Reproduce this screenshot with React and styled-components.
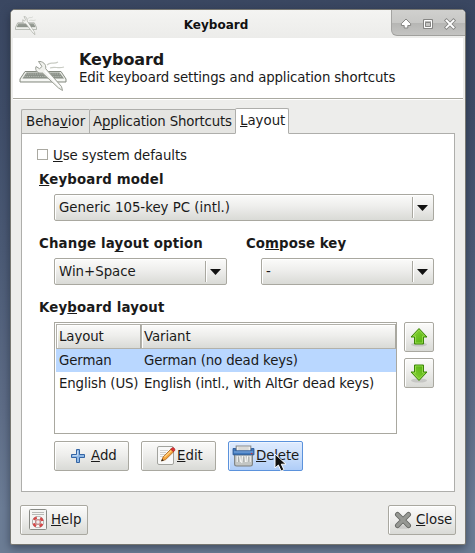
import React from "react";
import styled, { createGlobalStyle, css } from "styled-components";

const GlobalStyle = createGlobalStyle`
  html, body { margin: 0; padding: 0; }
  body { overflow: hidden; }
  * { box-sizing: border-box; }
`;

const Desktop = styled.div`
  width: 475px;
  height: 553px;
  padding: 9px 9px 8px 10px;
  font: 13.33px/16px "DejaVu Sans", sans-serif;
  color: #1a1a1a;
  background: linear-gradient(180deg, #3a4761 0%, #3f4d68 20%, #4b5a75 45%, #5f6e88 75%, #6c7d96 92%, #6c7d95 100%);
  overflow: hidden;
`;

const Window = styled.div`
  width: 456px;
  height: 536px;
  border: 1px solid #777771;
  border-radius: 5px 5px 2px 2px;
  background: #ededeb;
  box-shadow: 0 3px 8px rgba(20, 28, 42, 0.5);
  overflow: hidden;
  display: flex;
  flex-direction: column;
`;

const TitleBar = styled.div`
  height: 28px;
  flex: none;
  display: flex;
  align-items: flex-start;
  padding: 5px 0 0 4px;
  background: linear-gradient(#f4f4f2, #ececea);
`;

const TitleText = styled.div`
  flex: 1;
  padding-left: 10px;
  margin-top: 1px;
  text-align: center;
  font-size: 12px;
  font-weight: bold;
  line-height: 18px;
  color: #111;
  text-indent: -6px;
`;

const WindowControls = styled.div`
  width: 74px;
  height: 26px;
  margin-top: -5px;
  display: flex;
  align-items: center;
  padding: 3px 0 0 7px;
  gap: 8px;
  border-left: 1px solid #a4a4a2;
  border-bottom: 1px solid #a0a09d;
  border-bottom-left-radius: 6px;
  background: linear-gradient(#d0d0ce, #c8c8c6 50%, #b6b6b4 53%, #c4c4c2);
`;

const Header = styled.div`
  height: 61px;
  flex: none;
  margin: 0 2px;
  padding: 13px 0 0 6px;
  display: flex;
  background: #fff;
  border-bottom: 1px solid #aaa9a1;
  box-shadow: 0 1px 0 #fff;
  > svg { margin-top: 8px; }
`;

const HeaderText = styled.div`
  padding-left: 12px;
`;

const Heading = styled.div`
  font-size: 16px;
  letter-spacing: -0.1px;
  line-height: 17px;
  font-weight: bold;
`;

const Subheading = styled.div`
  line-height: 18px;
  margin-top: 1px;
  letter-spacing: -0.135px;
  white-space: nowrap;
`;

const TabBar = styled.div`
  height: 26px;
  margin: 9px 0 -1px 10px;
  display: flex;
  align-items: flex-end;
  flex: none;
`;

const Tab = styled.div`
  width: ${(p) => p.$w}px;
  height: ${(p) => (p.$active ? 26 : 25)}px;
  padding: 4px 0 0 ${(p) => (p.$tight ? 3 : 4)}px;
  letter-spacing: ${(p) => (p.$tight ? -0.17 : 0)}px;
  white-space: nowrap;
  border: 1px solid #aeaeab;
  border-right-width: ${(p) => (p.$active ? 1 : 0)}px;
  border-bottom: 1px solid ${(p) => (p.$active ? "#fff" : "#aeaeab")};
  border-top-left-radius: 2px;
  border-top-right-radius: ${(p) => (p.$active ? 2 : 0)}px;
  background: ${(p) => (p.$active ? "#fff" : "#e5e5e2")};
  position: relative;
  z-index: 1;
`;

const Panel = styled.div`
  width: 434px;
  height: 359px;
  flex: none;
  margin-left: 10px;
  padding: 15px 20px 0 15px;
  background: #fff;
  border: 1px solid #aeaeab;
`;

const CheckRow = styled.label`
  display: flex;
  height: 17px;
  gap: 5px;
`;

const CheckBox = styled.span`
  width: 11px;
  height: 11px;
  border: 1px solid #aaa9a1;
  background: #fff;
`;

const CheckLabel = styled.span`
  line-height: 16px;
  margin-top: -1px;
  letter-spacing: -0.08px;
`;

const FieldLabel = styled.div`
  height: 16px;
  margin-left: 2px;
  font-weight: bold;
  letter-spacing: ${(p) => p.$track ?? 0.16}px;
  white-space: nowrap;
`;

const FieldRow = styled.div`
  display: flex;
  gap: 34px;
  margin-top: ${(p) => (p.$first ? 6 : 15)}px;
`;

const Field = styled.div`
  width: ${(p) => p.$w}px;
`;

const buttonFace = css`
  border: 1px solid #a9a8a0;
  border-radius: 2px;
  background: linear-gradient(#fbfbfa, #eeeeec 45%, #d9dad6);
  box-shadow: inset 1px 1px 0 #fff;
`;

const Combo = styled.div`
  ${buttonFace}
  width: ${(p) => p.$w}px;
  height: 27px;
  margin: 6px 0 0 17px;
  padding: 0 5px 0 4px;
  display: flex;
  align-items: center;
  justify-content: space-between;
  line-height: 24px;
`;

const ComboArrow = styled.span`
  height: 21px;
  padding-left: 4px;
  border-left: 1px solid #a9a8a0;
  box-shadow: inset 1px 0 0 #fff;
  display: flex;
  align-items: center;
`;

const ListRow = styled.div`
  display: flex;
  margin: 6px 0 0 17px;
  gap: 7px;
`;

const List = styled.div`
  width: 343px;
  height: 112px;
  border: 1px solid #a9a8a0;
  padding: 1px 0 0 1px;
`;

const ListHeader = styled.div`
  display: flex;
  height: 25px;
`;

const HeaderCell = styled.div`
  width: ${(p) => p.$w}px;
  padding: 4px 0 0 2px;
  letter-spacing: -0.1px;
  border: 1px solid #b2b1aa;
  border-right: 1px solid #a9a8a0;
  background: linear-gradient(#fbfbfa, #eeeeec 45%, #d9dad6);
  box-shadow: inset 1px 1px 0 #fff;
`;

const ListItem = styled.div`
  display: flex;
  height: 23px;
  line-height: 23px;
  letter-spacing: -0.13px;
  white-space: nowrap;
  background: ${(p) => (p.$selected ? "#b9d7ff" : "#fff")};
`;

const Cell = styled.div`
  width: ${(p) => p.$w}px;
  padding-left: 3px;
`;

const MoveButtons = styled.div`
  display: flex;
  flex-direction: column;
  gap: 6px;
`;

const Button = styled.div`
  ${buttonFace}
  width: ${(p) => p.$w}px;
  height: 30px;
  padding-left: ${(p) => p.$pad}px;
  display: flex;
  align-items: center;
  gap: ${(p) => p.$gap || 0}px;
  line-height: 26px;
  white-space: nowrap;
  svg { flex: none; }
  ${(p) =>
    p.$hot &&
    css`
      position: relative;
      border-color: #5b92dc;
      background: linear-gradient(#dfebfe, #cbdffb 50%, #afcdf8);
      box-shadow: inset 1px 1px 0 #eef5ff;
      letter-spacing: -0.1px;
    `}
`;

const ButtonText = styled.span`
  height: 26px;
`;

const ButtonRow = styled.div`
  display: flex;
  gap: 12px;
  margin: 7px 0 0 17px;
`;

const Footer = styled.div`
  display: flex;
  justify-content: space-between;
  margin: 13px 9px 0 9px;
`;

const Pointer = styled.svg`
  position: absolute;
  left: 45px;
  top: 11px;
`;

const Mnemonic = styled.span`
  text-decoration: underline;
  text-decoration-thickness: 1px;
  text-decoration-skip-ink: none;
  text-underline-offset: ${(p) => p.$drop || 1}px;
`;

const KeyboardIcon = ({ width, height }) => (
  <svg width={width} height={height} viewBox="0 0 48 32" preserveAspectRatio="none">
    <path d="M28 6c4-4 6 0 11-3M31 9c5-2 8 1 14-1" fill="none" stroke="#c9ccc4" strokeWidth="1.2" />
    <path d="M6 12.5h36l5 7.5v3H1v-3z" fill="#eceee9" stroke="#858a80" />
    <path d="M7.5 13.5h33l4.5 6H3.500z" fill="#8b9189" />
    <path d="M7 15h35M5.500 17.500h38" stroke="#b4b9b0" strokeDasharray="1.2 1" />
    <path d="M2 21h44" stroke="#fff" />
    <path d="M19.500 2.500c4-.5 8 2.500 7.200 7.200L42.500 27.500l1 4-4-2.500L23.500 14c-4 .8-8-2-6.500-6.500l3.500 2.200 2.500-2.200z" fill="#f0f1ed" stroke="#9a9e95" />
    <path d="M25.500 11.500l15 16" stroke="#fff" strokeWidth="1.300" />
  </svg>
);

const Chevron = () => (
  <svg width="11" height="6" viewBox="0 0 11 6">
    <path d="M0 0h11L5.5 6z" fill="#111" />
  </svg>
);

const MoveArrow = ({ down }) => (
  <svg width="20" height="20" viewBox="0 0 20 20">
    <defs>
      <linearGradient id="green" x2="1" y2="1">
        <stop stopColor="#8fd83a" />
        <stop offset="1" stopColor="#4aab0a" />
      </linearGradient>
    </defs>
    <ellipse cx="10" cy="17.5" rx="8" ry="2" fill="#777" opacity=".25" />
    <g transform={down ? "matrix(1 0 0 -1 0 19)" : undefined}>
      <path d="M10 1.5l8 8.5h-3.5v7h-9v-7H2z" fill="url(#green)" stroke="#3c8508" strokeLinejoin="round" />
      <path d="M10 3.2l5.700 5.800h-2.200v7h-7V9H4.300z" fill="none" stroke="#a5e25a" strokeWidth=".7" />
    </g>
  </svg>
);

const AddIcon = () => (
  <svg width="14" height="14" viewBox="0 0 14 14">
    <path d="M5.500.5h3v5h5v3h-5v5h-3v-5h-5v-3h5z" fill="#8fb8e5" stroke="#3465a4" strokeLinejoin="round" />
    <path d="M6.600 2v4.600H2" fill="none" stroke="#c6dcf4" />
  </svg>
);

const EditIcon = () => (
  <svg width="20" height="20" viewBox="0 0 20 20">
    <rect x="1.500" y=".5" width="16" height="18" rx="1.500" fill="#f8f8f7" stroke="#a2a39e" />
    <path d="M4 4.500h8M4 6.500h6M4 8.500h5M4 10.500h3" stroke="#d2d2ce" />
    <path d="M5.500 15l1.600-4L15 3l2.800 2.600-8.200 8z" fill="#f5a43a" stroke="#a65f16" strokeWidth=".8" />
    <path d="M8.500 11l7-6.500" stroke="#ffd488" strokeWidth="1.100" />
    <path d="M14.700 3.200l1.300-1.400c1.600-.7 3.500 1 2.800 2.500L17.500 5.800z" fill="#dc3434" stroke="#a51b1b" strokeWidth=".6" />
    <path d="M5.200 15.300l.9-2.400 1.700 1.500z" fill="#222" />
  </svg>
);

const ShredderIcon = () => (
  <svg width="23" height="22" viewBox="0 0 22 22" preserveAspectRatio="none">
    <path d="M4 1h14v7H4z" fill="#eeeeec" stroke="#85878a" />
    <path d="M6 3h10M6 5h10" stroke="#c6c6c4" />
    <path d="M2.500 9h17v10q0 2-2 2h-13q-2 0-2-2z" fill="#c3c6c4" stroke="#7c7f7e" />
    <path d="M5 11v6M7.300 11l1 6M10 11l-.7 7M12.400 11l.5 6M15 11l-.8 6M17.300 11v6" stroke="#f6f6f5" strokeWidth="1.100" />
    <path d="M6.200 12v5M11.300 12v5M16.200 12v5" stroke="#949795" strokeWidth=".6" />
    <path d="M1 3.500h2.500v2.300h15V3.500H21v6.300H1z" fill="#4079bd" stroke="#265290" strokeWidth=".8" />
    <path d="M1.800 7h18.400" stroke="#86b1e2" />
    <path d="M18 8.600h1.500" stroke="#d33" />
  </svg>
);

const HelpIcon = () => (
  <svg width="20" height="22" viewBox="0 0 20 22">
    <rect x="1.500" y=".5" width="17" height="20" rx="1" fill="#f4f4f2" stroke="#888a85" />
    <path d="M4 3.500h12M4 5.500h12" stroke="#b8b9b5" />
    <circle cx="10" cy="13" r="4.200" fill="none" stroke="#8f8f8c" strokeWidth="3.600" />
    <circle cx="10" cy="13" r="4.200" fill="none" stroke="#f5f5f3" strokeWidth="2.400" />
    <circle cx="10" cy="13" r="4.500" fill="none" stroke="#d64848" strokeWidth="2.500" strokeDasharray="3.500 3.570" strokeDashoffset="-1.800" />
    <circle cx="10" cy="13" r="2.200" fill="#eee" stroke="#c64a4a" strokeWidth=".6" />
  </svg>
);

const CloseIcon = () => (
  <svg width="18" height="18" viewBox="0 0 18 18">
    <ellipse cx="9" cy="16" rx="8" ry="1.800" fill="#888" opacity=".25" />
    <path d="M3.500 3.500l11 11m0-11l-11 11" stroke="#656763" strokeWidth="5" strokeLinecap="round" />
    <path d="M3.500 3.500l11 11m0-11l-11 11" stroke="#969893" strokeWidth="3.200" strokeLinecap="round" />
  </svg>
);

const ShadeGlyph = () => (
  <svg width="14" height="14" viewBox="0 0 14 14">
    <path d="M7 2L2.400 6.700v1.800h2.800V11h3.600V8.500h2.800V6.700z" fill="#fff" stroke="#858583" strokeLinejoin="round" />
  </svg>
);

const MaximizeGlyph = () => (
  <svg width="14" height="14" viewBox="0 0 14 14">
    <path d="M2.500 2.500h9v9h-9z" fill="#bdbdbb" stroke="#858583" />
    <path d="M3.500 3.500h7v7h-7z" fill="none" stroke="#fff" />
    <path d="M4.500 5.500h5v4h-5z" fill="#c5c5c3" stroke="#858583" />
  </svg>
);

const CloseGlyph = () => (
  <svg width="14" height="14" viewBox="0 0 14 14">
    <path d="M3.500 3.500l7 7m0-7l-7 7" stroke="#858583" strokeWidth="3.600" strokeLinecap="square" />
    <path d="M3.500 3.500l7 7m0-7l-7 7" stroke="#fff" strokeWidth="1.900" strokeLinecap="square" />
  </svg>
);

const Select = ({ width, children }) => (
  <Combo $w={width}>
    <span>{children}</span>
    <ComboArrow><Chevron /></ComboArrow>
  </Combo>
);

export default function App() {
  return (
    <Desktop>
      <GlobalStyle />
      <Window>
        <TitleBar>
          <KeyboardIcon width={22} height={20} />
          <TitleText>Keyboard</TitleText>
          <WindowControls>
            <ShadeGlyph />
            <MaximizeGlyph />
            <CloseGlyph />
          </WindowControls>
        </TitleBar>
        <Header>
          <KeyboardIcon width={48} height={32} />
          <HeaderText>
            <Heading>Keyboard</Heading>
            <Subheading>Edit keyboard settings and application shortcuts</Subheading>
          </HeaderText>
        </Header>
        <TabBar>
          <Tab $w={68}>Beha<Mnemonic>v</Mnemonic>ior</Tab>
          <Tab $w={146} $tight>A<Mnemonic $drop={3}>p</Mnemonic>plication Shortcuts</Tab>
          <Tab $w={54} $active><Mnemonic>L</Mnemonic>ayout</Tab>
        </TabBar>
        <Panel>
          <CheckRow>
            <CheckBox />
            <CheckLabel><Mnemonic>U</Mnemonic>se system defaults</CheckLabel>
          </CheckRow>
          <FieldRow $first>
            <Field $w={397}>
              <FieldLabel><Mnemonic>K</Mnemonic>eyboard model</FieldLabel>
              <Select width={380}>Generic 105-key PC (intl.)</Select>
            </Field>
          </FieldRow>
          <FieldRow>
            <Field $w={173}>
              <FieldLabel>Change la<Mnemonic $drop={3}>y</Mnemonic>out option</FieldLabel>
              <Select width={173}>Win+Space</Select>
            </Field>
            <Field $w={190}>
              <FieldLabel $track={0.08}>Co<Mnemonic>m</Mnemonic>pose key</FieldLabel>
              <Select width={173}>-</Select>
            </Field>
          </FieldRow>
          <FieldRow>
            <Field $w={397}>
              <FieldLabel>Key<Mnemonic>b</Mnemonic>oard layout</FieldLabel>
            </Field>
          </FieldRow>
          <ListRow>
            <List>
              <ListHeader>
                <HeaderCell $w={85}>Layout</HeaderCell>
                <HeaderCell $w={255}>Variant</HeaderCell>
              </ListHeader>
              <ListItem $selected>
                <Cell $w={85}>German</Cell>
                <Cell $w={255}>German (no dead keys)</Cell>
              </ListItem>
              <ListItem>
                <Cell $w={85}>English (US)</Cell>
                <Cell $w={255}>English (intl., with AltGr dead keys)</Cell>
              </ListItem>
            </List>
            <MoveButtons>
              <Button $w={30} $pad={4}><MoveArrow /></Button>
              <Button $w={30} $pad={4}><MoveArrow down /></Button>
            </MoveButtons>
          </ListRow>
          <ButtonRow>
            <Button $w={75} $pad={16} $gap={6}><AddIcon /><ButtonText><Mnemonic>A</Mnemonic>dd</ButtonText></Button>
            <Button $w={75} $pad={14} $gap={1}><EditIcon /><ButtonText><Mnemonic>E</Mnemonic>dit</ButtonText></Button>
            <Button $w={75} $pad={3} $gap={1} $hot>
              <ShredderIcon />
              <ButtonText><Mnemonic>D</Mnemonic>elete</ButtonText>
              <Pointer width="14" height="20" viewBox="0 0 14 20">
                <path d="M1 1v14l3.400-3 2.700 6 2.800-1.300-2.600-5.500H12z" fill="#111" stroke="#fff" />
              </Pointer>
            </Button>
          </ButtonRow>
        </Panel>
        <Footer>
          <Button $w={68} $pad={7} $gap={3}><HelpIcon /><ButtonText><Mnemonic>H</Mnemonic>elp</ButtonText></Button>
          <Button $w={68} $pad={5} $gap={4}><CloseIcon /><ButtonText><Mnemonic>C</Mnemonic>lose</ButtonText></Button>
        </Footer>
      </Window>
    </Desktop>
  );
}
